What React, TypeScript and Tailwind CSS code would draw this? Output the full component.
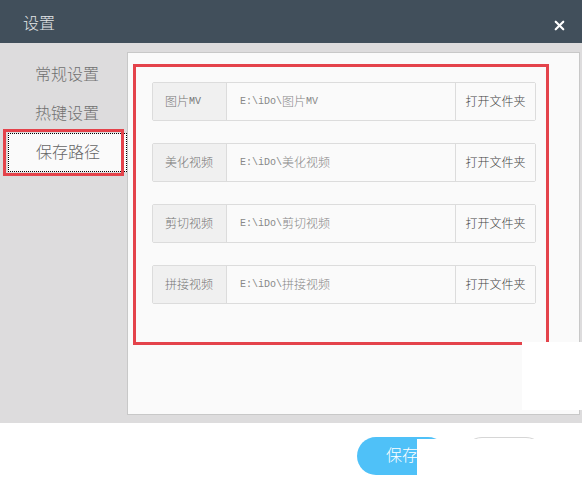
import { X } from 'lucide-react'

const navItems = ['常规设置', '热键设置', '保存路径']

const paths = [
  { label: '图片MV', dir: 'E:\\iDo\\图片MV' },
  { label: '美化视频', dir: 'E:\\iDo\\美化视频' },
  { label: '剪切视频', dir: 'E:\\iDo\\剪切视频' },
  { label: '拼接视频', dir: 'E:\\iDo\\拼接视频' },
]

// ascii runs go in a narrow mono face, CJK stays full width
function MixedText({ text }: { text: string }) {
  const parts = text.split(/([\x00-\x7f]+)/).filter(Boolean)
  return (
    <>
      {parts.map((p, i) =>
        /^[\x00-\x7f]+$/.test(p) ? (
          <span key={i} className="font-['Liberation_Mono',monospace] text-[10px]">{p}</span>
        ) : (
          <span key={i}>{p}</span>
        )
      )}
    </>
  )
}

export default function App() {
  const selected = 2

  return (
    <div className="relative w-[582px] h-[486px] overflow-hidden bg-white font-light font-['Liberation_Sans','Noto_Sans_CJK_SC',sans-serif]">
      {/* title bar */}
      <div className="h-[43px] bg-[#414f5b] flex items-center justify-between pl-[23px] pr-[15px] pt-[5px]">
        <span className="text-[16px] text-[#e4e6e8]">设置</span>
        <X size={15} strokeWidth={3.5} className="text-white mt-[2px]" />
      </div>

      <div className="h-[380px] bg-[#dddcdd] flex pt-[9px] pb-[8px]">
        {/* side nav */}
        <div className="w-[127px] pt-[3px] flex flex-col">
          {navItems.map((item, i) => (
            <div
              key={item}
              className={
                i === selected
                  ? 'relative ml-[8px] h-[39px] flex items-center pl-[27px] bg-[#fafafa] border border-dotted border-black text-[16px] text-[#666]'
                  : 'ml-[8px] h-[39px] flex items-center pl-[27px] text-[16px] text-[#707070]'
              }
            >
              {item}
              {i === selected && (
                <div className="absolute -left-[6px] -top-[5px] w-[121px] h-[47px] border-[3px] border-[#e4434b]" />
              )}
            </div>
          ))}
        </div>

        {/* content panel */}
        <div className="flex-1 mr-[2px] bg-[#fafafa] border border-[#c8c8c8] pl-[5px] pt-[11px]">
          <div className="w-[416px] h-[281px] border-[3px] border-[#e4434b] pl-[16px] pt-[15px] flex flex-col gap-[22px]">
            {paths.map((row) => (
              <div key={row.label} className="w-[384px] h-[39px] flex border border-[#dcdcdc] rounded-[2px] text-[12px]">
                <div className="w-[74px] shrink-0 bg-[#f0f0f0] border-r border-[#dcdcdc] flex items-center pl-[12px] text-[#777]">
                  <MixedText text={row.label} />
                </div>
                <div className="flex-1 bg-[#fafafa] flex items-center pl-[13px] text-[#888]">
                  <MixedText text={row.dir} />
                </div>
                <div className="w-[80px] shrink-0 border-l border-[#dcdcdc] bg-[#fafafa] flex items-center justify-center text-[#444]">
                  打开文件夹
                </div>
              </div>
            ))}
          </div>
        </div>
      </div>

      {/* footer buttons */}
      <div className="flex justify-end gap-4 pr-[37px] pt-[14px]">
        <button className="w-[90px] h-[38px] rounded-full bg-[#4fc1f8] text-white text-[16px]">保存</button>
        <button className="w-[82px] h-[38px] rounded-full border border-[#d6d6d6] text-[#666] text-[16px]">取消</button>
      </div>

      {/* white cover patches */}
      <div className="absolute left-[522px] top-[342px] w-[60px] h-[68px] bg-white" />
      <div className="absolute left-[417px] top-[439px] right-0 bottom-0 bg-white" />
    </div>
  )
}
